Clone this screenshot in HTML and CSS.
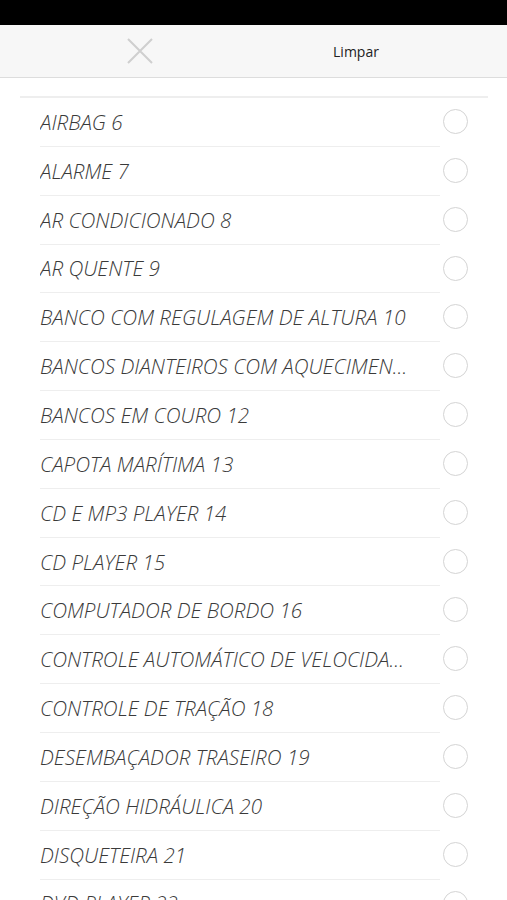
FILE: index.html
```html
<!DOCTYPE html>
<html lang="pt">
<head>
  <meta charset="UTF-8">
  <meta name="viewport" content="width=device-width, initial-scale=1.0">
  <title>Opcionais</title>
  <link rel="stylesheet" href="styles.css">
</head>
<body>

  <div class="status"></div>

  <div class="topo">
    <button class="fechar" aria-label="Fechar">
      <svg width="28" height="28" viewBox="0 0 28 28">
        <path d="M2 2 L26 26 M26 2 L2 26" stroke="#cfcfcf" stroke-width="2" fill="none"/>
      </svg>
    </button>
    <span class="limpar">Limpar</span>
  </div>

  <div class="lista">
    <div class="item"><span class="nome">AIRBAG 6</span><span class="radio"></span></div>
    <div class="item"><span class="nome">ALARME 7</span><span class="radio"></span></div>
    <div class="item"><span class="nome">AR CONDICIONADO 8</span><span class="radio"></span></div>
    <div class="item"><span class="nome">AR QUENTE 9</span><span class="radio"></span></div>
    <div class="item"><span class="nome">BANCO COM REGULAGEM DE ALTURA 10</span><span class="radio"></span></div>
    <div class="item"><span class="nome">BANCOS DIANTEIROS COM AQUECIMENTO 11</span><span class="radio"></span></div>
    <div class="item"><span class="nome">BANCOS EM COURO 12</span><span class="radio"></span></div>
    <div class="item"><span class="nome">CAPOTA MARÍTIMA 13</span><span class="radio"></span></div>
    <div class="item"><span class="nome">CD E MP3 PLAYER 14</span><span class="radio"></span></div>
    <div class="item"><span class="nome">CD PLAYER 15</span><span class="radio"></span></div>
    <div class="item"><span class="nome">COMPUTADOR DE BORDO 16</span><span class="radio"></span></div>
    <div class="item"><span class="nome">CONTROLE AUTOMÁTICO DE VELOCIDADE 17</span><span class="radio"></span></div>
    <div class="item"><span class="nome">CONTROLE DE TRAÇÃO 18</span><span class="radio"></span></div>
    <div class="item"><span class="nome">DESEMBAÇADOR TRASEIRO 19</span><span class="radio"></span></div>
    <div class="item"><span class="nome">DIREÇÃO HIDRÁULICA 20</span><span class="radio"></span></div>
    <div class="item"><span class="nome">DISQUETEIRA 21</span><span class="radio"></span></div>
    <div class="item"><span class="nome">DVD PLAYER 22</span><span class="radio"></span></div>
  </div>

</body>
</html>
```

FILE: styles.css
```css
html, body {
  margin: 0;
  padding: 0;
}

body {
  font-family: "Open Sans", "Noto Sans", sans-serif;
  background-color: #ffffff;
  color: #333333;
  width: 507px;
  height: 900px;
  overflow: hidden;
}

.status {
  height: 25px;
  background-color: #000000;
}

.topo {
  height: 52px;
  background-color: #f7f7f7;
  border-bottom: 1px solid #dddddd;
  display: flex;
  align-items: center;
}

.fechar {
  width: 279px;
  height: 52px;
  background: none;
  border: none;
  padding: 0;
  display: flex;
  align-items: center;
  justify-content: center;
  cursor: pointer;
}

.limpar {
  width: 154px;
  text-align: center;
  font-size: 14px;
  color: #222222;
}

.lista {
  margin: 18px 19px 0 20px;
  border-top: 2px solid #eeeeee;
}

.item {
  height: 47.85px;
  margin-left: 20px;
  margin-right: 48px;
  display: flex;
  align-items: center;
  border-bottom: 1px solid #eeeeee;
  position: relative;
}

.nome {
  flex: 1;
  min-width: 0;
  font-size: 20.6px;
  font-style: italic;
  font-weight: 300;
  color: #3a3a3a;
  white-space: nowrap;
  overflow: hidden;
  text-overflow: ellipsis;
  padding-right: 26px;
}

.radio {
  position: absolute;
  right: -28px;
  top: 11px;
  width: 23px;
  height: 23px;
  border: 1.5px solid #d4d4d4;
  border-radius: 50%;
}
```
